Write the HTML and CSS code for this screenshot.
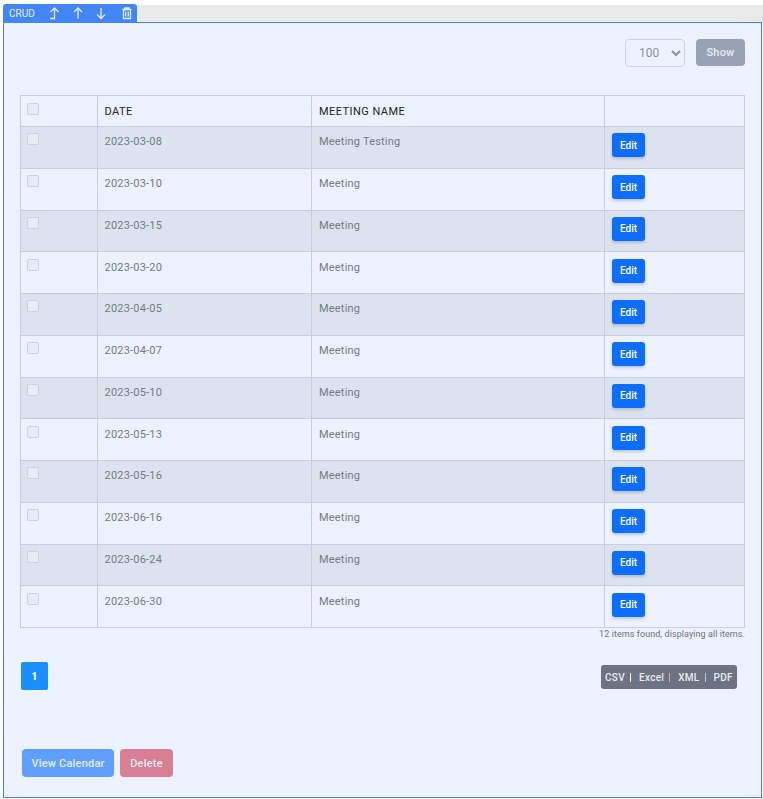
FILE: index.html
```html
<!DOCTYPE html>
<html lang="en">
<head>
<meta charset="utf-8">
<title>CRUD</title>
<link rel="stylesheet" href="styles.css">
</head>
<body>
<div class="topbar">
  <div class="tab">
    <span class="tab-label">CRUD</span>
    <svg class="tab-icon" viewBox="0 0 14 14"><path d="M3 12.500H7.500V2M3.500 6 7.500 2l4 4" /></svg>
    <svg class="tab-icon" viewBox="0 0 14 14"><path d="M7 12.500V2M3 6l4-4 4 4" /></svg>
    <svg class="tab-icon" viewBox="0 0 14 14"><path d="M7 2v10.500M3 8.500l4 4 4-4" /></svg>
    <svg class="tab-icon tab-icon-last" viewBox="0 0 14 14"><path d="M2.500 3.500h9M5 3.500V2h4v1.500M3.500 3.500v9h7v-9M5.700 5.500v5M8.300 5.500v5" /></svg>
  </div>
</div>
<main class="panel">
  <div class="controls">
    <select class="size-select" disabled><option>100</option></select>
    <button class="btn btn-show" type="button">Show</button>
  </div>
  <table class="grid">
    <colgroup><col class="c1"><col class="c2"><col class="c3"><col class="c4"></colgroup>
    <thead>
      <tr><th class="cell-box"><span class="check"></span></th><th class="cell-date">DATE</th><th>MEETING NAME</th><th></th></tr>
    </thead>
    <tbody>
      <tr><td class="cell-box"><span class="check"></span></td><td class="cell-date">2023-03-08</td><td>Meeting Testing</td><td class="cell-box"><button class="btn-edit" type="button">Edit</button></td></tr>
      <tr><td class="cell-box"><span class="check"></span></td><td class="cell-date">2023-03-10</td><td>Meeting</td><td class="cell-box"><button class="btn-edit" type="button">Edit</button></td></tr>
      <tr><td class="cell-box"><span class="check"></span></td><td class="cell-date">2023-03-15</td><td>Meeting</td><td class="cell-box"><button class="btn-edit" type="button">Edit</button></td></tr>
      <tr><td class="cell-box"><span class="check"></span></td><td class="cell-date">2023-03-20</td><td>Meeting</td><td class="cell-box"><button class="btn-edit" type="button">Edit</button></td></tr>
      <tr><td class="cell-box"><span class="check"></span></td><td class="cell-date">2023-04-05</td><td>Meeting</td><td class="cell-box"><button class="btn-edit" type="button">Edit</button></td></tr>
      <tr><td class="cell-box"><span class="check"></span></td><td class="cell-date">2023-04-07</td><td>Meeting</td><td class="cell-box"><button class="btn-edit" type="button">Edit</button></td></tr>
      <tr><td class="cell-box"><span class="check"></span></td><td class="cell-date">2023-05-10</td><td>Meeting</td><td class="cell-box"><button class="btn-edit" type="button">Edit</button></td></tr>
      <tr><td class="cell-box"><span class="check"></span></td><td class="cell-date">2023-05-13</td><td>Meeting</td><td class="cell-box"><button class="btn-edit" type="button">Edit</button></td></tr>
      <tr><td class="cell-box"><span class="check"></span></td><td class="cell-date">2023-05-16</td><td>Meeting</td><td class="cell-box"><button class="btn-edit" type="button">Edit</button></td></tr>
      <tr><td class="cell-box"><span class="check"></span></td><td class="cell-date">2023-06-16</td><td>Meeting</td><td class="cell-box"><button class="btn-edit" type="button">Edit</button></td></tr>
      <tr><td class="cell-box"><span class="check"></span></td><td class="cell-date">2023-06-24</td><td>Meeting</td><td class="cell-box"><button class="btn-edit" type="button">Edit</button></td></tr>
      <tr><td class="cell-box"><span class="check"></span></td><td class="cell-date">2023-06-30</td><td>Meeting</td><td class="cell-box"><button class="btn-edit" type="button">Edit</button></td></tr>
    </tbody>
  </table>
  <p class="found">12 items found, displaying all items.</p>
  <div class="pager-row">
    <span class="page">1</span>
    <div class="exports">
      <span>CSV</span><i class="sep s-white"></i>
      <span>Excel</span><i class="sep s-red"></i>
      <span>XML</span><i class="sep s-blue"></i>
      <span>PDF</span>
    </div>
  </div>
  <div class="actions">
    <button class="btn btn-cal" type="button">View Calendar</button>
    <button class="btn btn-del" type="button">Delete</button>
  </div>
</main>
</body>
</html>
```
FILE: styles.css
```css
* { box-sizing: border-box; }
html, body { margin: 0; padding: 0; }
body {
  width: 763px;
  height: 799px;
  overflow: hidden;
  background: #fff;
  font-family: Roboto, "Liberation Sans", sans-serif;
  padding-top: 4px;
}
.topbar {
  margin-left: 3px;
  height: 18px;
  background: linear-gradient(#fff 0, #fff 1px, #e9e9e9 1px);
}
.tab {
  width: 134px;
  height: 18px;
  background: #4285f4;
  border-radius: 3px 3px 0 0;
  display: flex;
  align-items: center;
  color: #fff;
  padding-left: 6px;
}
.tab-label { font-size: 10px; width: 38px; color: #e8f0ff; }
.tab-icon {
  width: 14px;
  height: 14px;
  margin-right: 9.500px;
  fill: none;
  stroke: #e4edff;
  stroke-width: 1.300;
}
.tab-icon-last { margin-left: 2.500px; margin-right: 0; }
.panel {
  margin-left: 3px;
  width: 759px;
  height: 776px;
  background: #ecf2ff;
  border: 1px solid #4a7fdc;
  border-top-color: #4285f4;
  padding: 16px 16px 0;
  display: flex;
  flex-direction: column;
  align-items: stretch;
}
.controls {
  display: flex;
  justify-content: flex-end;
  gap: 11px;
  height: 28px;
}
.size-select {
  width: 60px;
  height: 28px;
  background: #ecf2ff;
  border: 1px solid #ccd4e2;
  border-radius: 4px;
  color: #8b93a1;
  font: 12px Roboto, sans-serif;
  padding-left: 9px;
  opacity: 1;
}
.btn {
  border: 0;
  border-radius: 4px;
  font-family: Roboto, sans-serif;
  font-weight: 500;
  font-size: 11px;
  letter-spacing: 0.200px;
  height: 28px;
  color: #e6ecf6;
}
.btn-show { width: 49px; height: 27px; background: #98a2b2; }
.grid {
  margin-top: 28px;
  width: 724px;
  border-collapse: collapse;
  table-layout: fixed;
  color: #727b88;
  font-size: 11px;
}
.c1 { width: 77px; }
.c2 { width: 214px; }
.c3 { width: 293px; }
.c4 { width: 140px; }
.grid th, .grid td {
  border: 1px solid #c8cfdb;
  padding: 7.250px 7px 7px;
  vertical-align: top;
  text-align: left;
  line-height: 16px;
}
.grid th {
  height: 31px;
  font-weight: 400;
  color: #212529;
  letter-spacing: 0.450px;
  vertical-align: middle;
  padding: 1px 7px 0;
}
.grid td { height: 41.750px; letter-spacing: 0.200px; }
.grid .cell-box { padding: 6.250px 6px 6px; vertical-align: top; }
.grid th.cell-box { padding-top: 7px; }
.grid .cell-date { padding-left: 6.500px; }
.grid td:last-child { padding-left: 7px; }
.grid tbody tr:nth-child(odd) { background: #dde3ee; }
.check {
  display: block;
  width: 12px;
  height: 12px;
  border: 1px solid #ccd3de;
  border-radius: 2px;
  background: #e7ecf5;
}
.btn-edit {
  display: block;
  width: 33px;
  height: 24px;
  border: 0;
  border-radius: 3px;
  background: #0d6efd;
  color: #fff;
  font: 500 10px Roboto, sans-serif;
  box-shadow: 0 2px 3px rgba(60, 80, 120, .25);
  padding: 0;
}
.found {
  margin: 1px 0 0;
  width: 725px;
  text-align: right;
  font-size: 9px;
  line-height: 11px;
  letter-spacing: 0.070px;
  color: #6c757d;
}
.pager-row {
  margin-top: 22px;
  margin-left: 1px;
  width: 716px;
  display: flex;
  justify-content: space-between;
  align-items: flex-start;
}
.page {
  width: 27px;
  height: 28px;
  background: #1a8fff;
  border-radius: 2px;
  color: #fff;
  font-weight: 700;
  font-size: 11px;
  display: flex;
  align-items: center;
  justify-content: center;
}
.exports {
  margin-top: 3px;
  width: 136px;
  height: 24px;
  background: #6d7380;
  border-radius: 3px;
  display: flex;
  align-items: center;
  padding-left: 4px;
  color: #e6ecf6;
  font-size: 10px;
  font-weight: 500;
  letter-spacing: 0.300px;
}
.sep { width: 1px; height: 9px; margin: 0 8px 0 5px; background: #fff; }
.sep.s-red { background: #f09aa4; margin-right: 8px; }
.sep.s-blue { background: #9fd0fa; margin-right: 8px; }
.actions {
  margin-top: 59px;
  margin-left: 2px;
  display: flex;
  gap: 6px;
}
.btn-cal { width: 92px; background: #5fa0ff; }
.btn-del { width: 53px; background: #d87d92; }
```
